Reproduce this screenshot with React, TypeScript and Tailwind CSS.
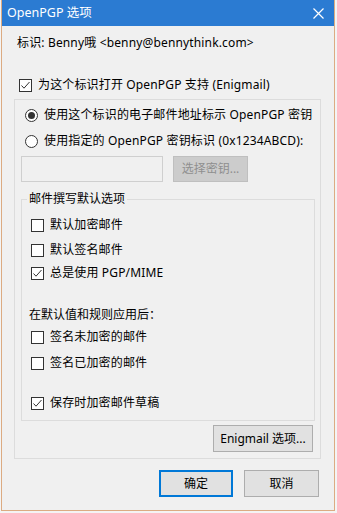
import React from 'react';

const font = { fontFamily: '"Noto Sans", "Noto Sans CJK SC", sans-serif' };

function Check({ checked }: { checked?: boolean }) {
    return (
        <span className="w-[13px] h-[13px] shrink-0 border border-[#333333] bg-white flex items-center justify-center">
            {checked && (
                <svg width="11" height="11" viewBox="0 0 11 11">
                    <path d="M1.5 5.5 L4 8.2 L9.5 2" stroke="#333333" fill="none" strokeWidth="1" />
                </svg>
            )}
        </span>
    );
}

function Radio({ checked }: { checked?: boolean }) {
    return (
        <span className="w-[13px] h-[13px] shrink-0 rounded-full border border-[#333333] bg-white flex items-center justify-center">
            {checked && <span className="w-[7px] h-[7px] rounded-full bg-[#333333]" />}
        </span>
    );
}

function Row({ children, box, className = '' }: { children: React.ReactNode; box: React.ReactNode; className?: string }) {
    return (
        <div className={`h-[16px] flex items-center gap-[6px] ${className}`}>
            {box}
            <span className="leading-[16px] whitespace-nowrap tracking-[0.15px]">{children}</span>
        </div>
    );
}

export default function App() {
    return (
        <div className="w-[337px] h-[513px] bg-[#f4f4f4] pl-[1px] text-[12px] text-black" style={font}>
            <div className="w-[334px] h-[511px] border-x border-b border-[#dcab82] bg-[#f0f0f0] flex flex-col">
                <div className="h-[26px] bg-[#2b7bd2] flex items-center justify-between pl-[5px] pr-[10px] text-white">
                    <span className="text-[12.5px]">OpenPGP 选项</span>
                    <svg width="11" height="11" viewBox="0 0 11 11">
                        <path d="M0.5 0.5 L10.5 10.5 M10.5 0.5 L0.5 10.5" stroke="white" strokeWidth="1.2" />
                    </svg>
                </div>

                <div className="pl-[15px] mt-[9px] h-[16px] leading-[16px] whitespace-nowrap tracking-[0.15px]">
                    标识: Benny哦 &lt;benny@bennythink.com&gt;
                </div>

                <Row box={<Check checked />} className="pl-[17px] mt-[26px]">
                    为这个标识打开 OpenPGP 支持 (Enigmail)
                </Row>

                <fieldset className="ml-[12px] mt-[6px] w-[307px] h-[360px] border border-[#dcdcdc] flex flex-col">
                    <Row box={<Radio checked />} className="pl-[10px] mt-[7px]">
                        使用这个标识的电子邮件地址标示 OpenPGP 密钥
                    </Row>
                    <Row box={<Radio />} className="pl-[10px] mt-[10px]">
                        使用指定的 OpenPGP 密钥标识 (0x1234ABCD):
                    </Row>
                    <div className="flex items-center mt-[7px] pl-[6px] gap-[10px]">
                        <div className="w-[142px] h-[26px] border border-[#cfcfcf] bg-[#f0f0f0]" />
                        <div className="w-[75px] h-[26px] border border-[#bfbfbf] bg-[#cccccc] text-[#8f8f8f] flex items-center justify-center">
                            选择密钥...
                        </div>
                    </div>

                    <fieldset className="ml-[6px] mt-[9px] w-[294px] border border-[#dcdcdc] pb-[9px]">
                        <legend className="ml-[5px] px-[2px] leading-[16px]">邮件撰写默认选项</legend>
                        <Row box={<Check />} className="pl-[9px] mt-[10px]">默认加密邮件</Row>
                        <Row box={<Check />} className="pl-[9px] mt-[9px]">默认签名邮件</Row>
                        <Row box={<Check checked />} className="pl-[9px] mt-[7px]">总是使用 PGP/MIME</Row>
                        <div className="pl-[7px] mt-[26px] h-[16px] leading-[16px]">在默认值和规则应用后：</div>
                        <Row box={<Check />} className="pl-[9px] mt-[6px]">签名未加密的邮件</Row>
                        <Row box={<Check />} className="pl-[9px] mt-[10px]">签名已加密的邮件</Row>
                        <Row box={<Check checked />} className="pl-[9px] mt-[24px]">保存时加密邮件草稿</Row>
                    </fieldset>

                    <div className="flex justify-end pr-[7px] mt-[4px]">
                        <div className="w-[100px] h-[27px] border border-[#adadad] bg-[#e1e1e1] flex items-center justify-center">
                            Enigmail 选项...
                        </div>
                    </div>
                </fieldset>

                <div className="flex justify-end gap-[11px] pr-[15px] mt-[11px]">
                    <div className="w-[74px] h-[27px] border-2 border-[#0078d7] bg-[#e1e1e1] flex items-center justify-center">
                        确定
                    </div>
                    <div className="w-[75px] h-[27px] border border-[#adadad] bg-[#e1e1e1] flex items-center justify-center">
                        取消
                    </div>
                </div>
            </div>
        </div>
    );
}
